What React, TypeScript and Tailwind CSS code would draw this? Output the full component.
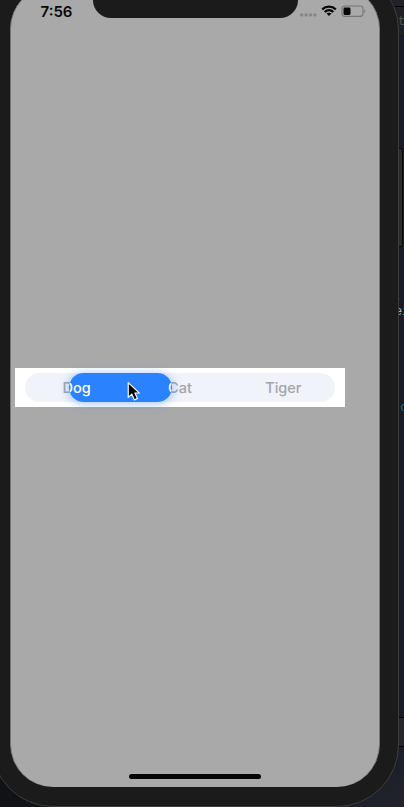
const labels = ["Dog", "Cat", "Tiger"];

function Labels({ className }: { className: string }) {
  return (
    <div className={`grid h-[29px] w-[310px] grid-cols-3 items-center text-center text-[14.5px] leading-[29px] font-medium ${className}`}>
      {labels.map((label) => (
        <span key={label}>{label}</span>
      ))}
    </div>
  );
}

function StatusIcons() {
  return (
    <svg className="ml-px h-[24px] w-[81px] shrink-0" viewBox="0 0 81 24" fill="none">
      <g fill="#858585">
        <circle cx="2.7" cy="14.9" r="1.7" />
        <circle cx="7.1" cy="14.9" r="1.7" />
        <circle cx="11.5" cy="14.9" r="1.7" />
        <circle cx="15.9" cy="14.9" r="1.7" />
      </g>
      <g stroke="#080808" strokeWidth="2.3">
        <path d="M23.2 9.4C27 5.7 33 5.7 36.8 9.4" />
        <path d="M25.7 12C28.2 9.6 31.8 9.6 34.3 12" />
      </g>
      <path d="M27.5 13.6C28.9 12.3 31.1 12.3 32.5 13.6L30 16.1Z" fill="#080808" />
      <rect x="43" y="6" width="21" height="10.4" rx="2.8" stroke="#777" strokeWidth="1.1" />
      <rect x="44.5" y="7.6" width="7" height="7.4" rx="1.4" fill="#080808" />
      <path d="M65.1 9.4C66.5 9.9 66.5 12.5 65.1 13Z" fill="#777" />
    </svg>
  );
}

function EditorEdge() {
  return (
    <aside className="absolute inset-y-0 right-0 flex w-[70px] flex-col bg-[#171c27] pl-[61px] font-['Liberation_Mono',monospace] text-[12px] leading-[14px]">
      <div className="-ml-[20px] h-[6px] shrink-0 bg-[#22232a]" />
      <div className="-ml-[20px] h-[29px] shrink-0 border-t border-black bg-[#202127] pt-[8px] pl-[23px] text-[#555]">t</div>
      <div className="h-[255px] shrink-0" />
      <span className="h-[15px] shrink-0 text-[#126a7c]">.</span>
      <span className="h-[96px] shrink-0 text-[#b5b5b5]">ei</span>
      <span className="-ml-[2px] text-[#127483]">.c</span>
      <div className="grow" />
      <div className="-ml-[20px] h-[30px] shrink-0 border-y border-black bg-[#25262a]" />
      <div className="-ml-[61px] h-[60px] shrink-0 bg-linear-to-br from-[#141821] via-[#1a1f2a] to-[#242329]" />
    </aside>
  );
}

function SegmentedControl() {
  return (
    <div className="ml-[4px] h-[39px] w-[330px] bg-white px-[10px] pt-[5px]">
      <div className="grid h-[29px] w-[310px] rounded-full bg-[#f0f3f9] *:[grid-area:1/1]">
        <Labels className="text-[#a3a5aa]" />
        <div className="ml-[43.5px] h-[29px] w-[103.5px] rounded-full shadow-[0_1px_10px_rgba(43,130,255,0.5)]">
          <div className="h-full overflow-hidden rounded-full bg-[#2b82ff]">
            <Labels className="-ml-[43.5px] text-white" />
          </div>
        </div>
        <svg className="mt-[8px] ml-[101px] h-[22px] w-[16px]" viewBox="0 0 15 21">
          <path d="M2 1.5V15.7L5.4 12.5L7.8 18L10.8 16.7L8.4 11.5H12.7Z" fill="#080808" stroke="white" strokeWidth="1.1" strokeLinejoin="round" />
        </svg>
      </div>
    </div>
  );
}

export default function App() {
  return (
    <main className="relative h-[807px] w-[404px] overflow-hidden bg-[#111216] font-['Inter',sans-serif]">
      <EditorEdge />
      <div className="absolute top-[148px] left-[392px] h-[99px] w-[10.5px] rounded-[2px] border border-[#080808] bg-[#2b2b2b]" />
      <div className="relative -mt-[32px] -ml-[9px] flex h-[838.5px] w-[408px] rounded-[62px] border border-[#3d3d3d] bg-[#1b1b1b] pt-[17px] pl-[18px]">
        <section className="flex h-[801px] w-[370px] flex-col rounded-[43px] border-x border-[#777] bg-[#a9a9a9] pt-[14px]">
          <header className="-ml-px flex h-[368px] items-start">
            <span className="w-[83px] shrink-0 pt-[3px] pl-[30.5px] text-[15px] leading-[18px] font-semibold text-[#080808]">7:56</span>
            <div className="h-[18px] w-[205px] shrink-0 rounded-b-[22px] bg-[#1b1b1b]" />
            <StatusIcons />
          </header>
          <SegmentedControl />
          <div className="mt-[367px] ml-[118px] h-[5px] w-[132px] rounded-full bg-[#050505]" />
        </section>
      </div>
    </main>
  );
}
